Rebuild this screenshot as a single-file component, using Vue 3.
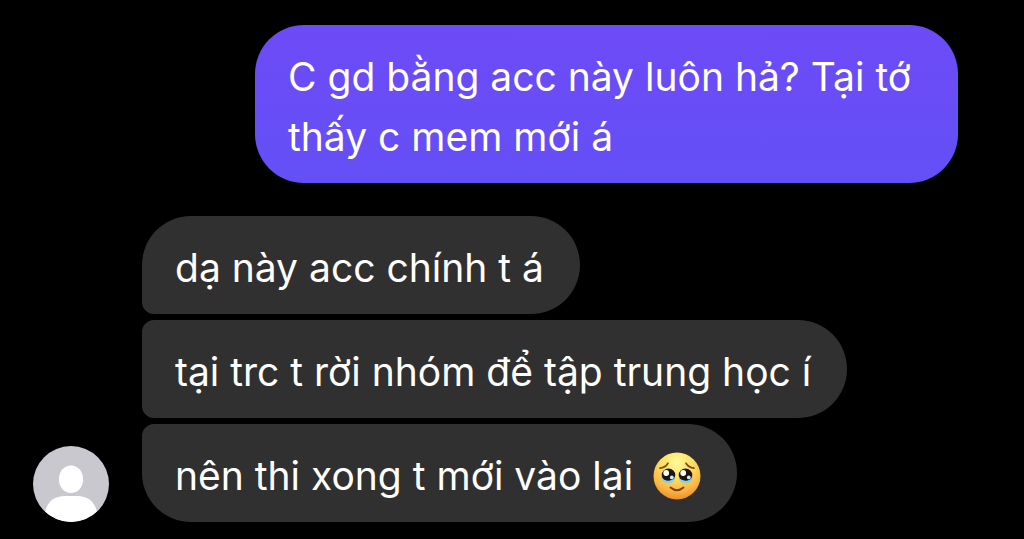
<script setup>
const sent = 'C gd bằng acc này luôn hả? Tại tớ thấy c mem mới á'
const received = [
  { id: 1, text: 'dạ này acc chính t á' },
  { id: 2, text: 'tại trc t rời nhóm để tập trung học í' },
  { id: 3, text: 'nên thi xong t mới vào lại', emoji: true }
]
</script>

<template>
  <main class="chat">
    <p class="bubble sent">{{ sent }}</p>

    <section class="incoming">
      <svg class="avatar" viewBox="0 0 76 76" role="img" aria-label="Avatar">
        <defs>
          <clipPath id="avatar-clip"><circle cx="38" cy="38" r="38" /></clipPath>
        </defs>
        <g clip-path="url(#avatar-clip)">
          <rect width="76" height="76" fill="#c9c8cf" />
          <rect x="26" y="19.500" width="24" height="27.500" rx="12" ry="13" fill="#fff" />
          <path d="M11 76C11 59 18 50 32 50H44C58 50 65 59 65 76Z" fill="#fff" />
        </g>
      </svg>

      <div class="stack">
        <p v-for="m in received" :key="m.id" class="bubble received">
          <span>{{ m.text }}</span>
          <svg v-if="m.emoji" class="emoji" viewBox="0 0 48 48" role="img" aria-label="Face holding back tears">
            <defs>
              <radialGradient id="face" cx="50%" cy="22%" r="80%">
                <stop offset="0" stop-color="#fffa9a" />
                <stop offset="0.4" stop-color="#fee066" />
                <stop offset="0.75" stop-color="#fbb643" />
                <stop offset="1" stop-color="#ea8a28" />
              </radialGradient>
              <linearGradient id="tear" x1="0" y1="0" x2="0" y2="1">
                <stop offset="0" stop-color="#58bfe6" />
                <stop offset="1" stop-color="#a8cfae" />
              </linearGradient>
            </defs>
            <circle cx="24" cy="24" r="23.500" fill="url(#face)" />
            <path d="M8.500 25C9 33 20 34 22 26Z M26 26C28 34 39 33 39.500 25Z" fill="url(#tear)" />
            <ellipse cx="15.500" cy="23" rx="6.800" ry="6.500" fill="#1c1410" />
            <ellipse cx="32.500" cy="23" rx="6.800" ry="6.500" fill="#1c1410" />
            <circle cx="13.200" cy="21" r="2.900" fill="#fff" />
            <circle cx="30.200" cy="21" r="2.900" fill="#fff" />
            <circle cx="18.800" cy="25.400" r="1.900" fill="#d5eaf2" />
            <circle cx="35.800" cy="25.400" r="1.900" fill="#d5eaf2" />
            <path d="M10 27.800Q15.500 31 20.500 28" fill="none" stroke="#85d8ef" stroke-width="1.500" stroke-linecap="round" />
            <path d="M27.500 28Q32.500 31 38 27.800" fill="none" stroke="#85d8ef" stroke-width="1.500" stroke-linecap="round" />
            <path d="M7 16.200Q12.500 15.500 15 11.200M41 16.200Q35.500 15.500 33 11.200" fill="none" stroke="#805018" stroke-width="1.700" stroke-linecap="round" />
            <path d="M17.500 35.500Q24 41 30.500 35.500" fill="none" stroke="#80400f" stroke-width="1.900" stroke-linecap="round" />
          </svg>
        </p>
      </div>
    </section>
  </main>
</template>

<style>
body {
  background: #000;
}
</style>

<style scoped>
.chat {
  display: flex;
  flex-direction: column;
  gap: 33px;
  padding: 25px 66px 17px 33px;
  background: #000;
  color: #fff;
  font-family: Inter, "Noto Sans", sans-serif;
  font-size: 39px;
  line-height: 60px;
}

.bubble {
  margin: 0;
  padding: 22px 36px 16px 33px;
  border-radius: 49px;
}

.sent {
  align-self: flex-end;
  max-width: 76%;
  box-sizing: border-box;
  background: linear-gradient(#6d4bf7, #644ff5);
}

.incoming {
  display: flex;
  align-items: flex-end;
  gap: 33px;
}

.avatar {
  flex: none;
  width: 76px;
  height: 76px;
}

.stack {
  display: flex;
  flex-direction: column;
  align-items: flex-start;
  gap: 6px;
}

.received {
  display: flex;
  align-items: center;
  gap: 20px;
  background: #303030;
  border-top-left-radius: 12px;
  border-bottom-left-radius: 12px;
}

.received:first-child {
  border-top-left-radius: 49px;
}

.received:last-child {
  border-bottom-left-radius: 49px;
}

.emoji {
  flex: none;
  width: 48px;
  height: 48px;
}
</style>
